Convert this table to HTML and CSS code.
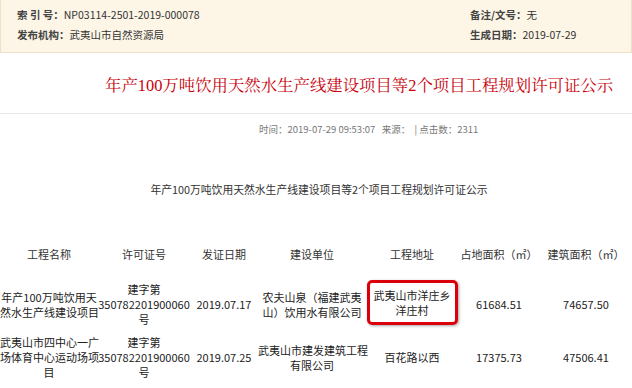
FILE: index.html
```html
<!DOCTYPE html>
<html lang="zh-CN">
<head>
<meta charset="utf-8">
<title>规划许可证公示</title>
<link rel="stylesheet" href="styles.css">
</head>
<body>
<div class="meta-box">
  <div class="meta-col meta-left">
    <div class="meta-row"><span class="meta-label">索 引 号：</span>NP03114-2501-2019-000078</div>
    <div class="meta-row"><span class="meta-label">发布机构：</span>武夷山市自然资源局</div>
  </div>
  <div class="meta-col meta-right">
    <div class="meta-row"><span class="meta-label">备注/文号：</span>无</div>
    <div class="meta-row"><span class="meta-label">生成日期：</span>2019-07-29</div>
  </div>
</div>

<div class="title-block">
  <h1 class="title">年产100万吨饮用天然水生产线建设项目等2个项目工程规划许可证公示</h1>
</div>

<div class="info">时间：2019-07-29 09:53:07&nbsp;&nbsp;&nbsp;来源：&nbsp;&nbsp;|&nbsp;点击数：2311</div>

<div class="subtitle">年产100万吨饮用天然水生产线建设项目等2个项目工程规划许可证公示</div>

<table class="grid">
  <colgroup>
    <col class="c1"><col class="c2"><col class="c3"><col class="c4"><col class="c5"><col class="c6"><col class="c7">
  </colgroup>
  <thead>
    <tr>
      <th>工程名称</th>
      <th>许可证号</th>
      <th>发证日期</th>
      <th>建设单位</th>
      <th>工程地址</th>
      <th>占地面积（㎡）</th>
      <th>建筑面积（㎡）</th>
    </tr>
  </thead>
  <tbody>
    <tr>
      <td>年产100万吨饮用天<br>然水生产线建设项目</td>
      <td>建字第<br>350782201900060<br>号</td>
      <td>2019.07.17</td>
      <td>农夫山泉（福建武夷<br>山）饮用水有限公司</td>
      <td><div class="mark">武夷山市洋庄乡<br>洋庄村</div></td>
      <td>61684.51</td>
      <td>74657.50</td>
    </tr>
    <tr>
      <td>武夷山市四中心一广<br>场体育中心运动场项<br>目</td>
      <td>建字第<br>350782201900060<br>号</td>
      <td>2019.07.25</td>
      <td>武夷山市建发建筑工程<br>有限公司</td>
      <td>百花路以西</td>
      <td>17375.73</td>
      <td>47506.41</td>
    </tr>
  </tbody>
</table>
</body>
</html>
```
FILE: styles.css
```css
html, body {
  margin: 0;
  padding: 0;
  background: #fff;
}
body {
  font-family: "Noto Sans CJK SC", "Noto Sans", sans-serif;
  font-size: 11px;
  color: #333;
  width: 632px;
  overflow: hidden;
}
.meta-box {
  box-sizing: border-box;
  height: 53px;
  background: #fdf6e6;
  border: 1px solid #ede2c9;
  border-top: none;
  display: flex;
  padding: 5px 0 0 16px;
}
.meta-col {
  display: flex;
  flex-direction: column;
}
.meta-left {
  width: 453px;
}
.meta-row {
  line-height: 20px;
  font-size: 10.5px;
  color: #333;
  white-space: nowrap;
}
.meta-label {
  font-weight: 600;
  color: #444;
}
.title-block {
  height: 61px;
  box-sizing: border-box;
  padding-top: 21px;
  border-bottom: 1px solid #e6e6e6;
}
.title {
  margin: 0;
  padding-left: 105px;
  font-family: "Liberation Serif", "Noto Serif CJK SC", "Noto Sans CJK SC", serif;
  font-weight: normal;
  font-size: 16.4px;
  line-height: 24px;
  color: #c8000b;
  white-space: nowrap;
}
.info {
  margin-top: 5px;
  padding-left: 259px;
  line-height: 20px;
  font-size: 9.5px;
  color: #777;
  white-space: nowrap;
}
.subtitle {
  margin-top: 40px;
  padding-left: 6px;
  line-height: 20px;
  text-align: center;
  font-size: 10.8px;
  color: #333;
  white-space: nowrap;
}
.grid {
  margin-top: 30px;
  width: 632px;
  table-layout: fixed;
  border-collapse: collapse;
}
.c1 { width: 98px; }
.c2 { width: 92px; }
.c3 { width: 68px; }
.c4 { width: 108px; }
.c5 { width: 92px; }
.c6 { width: 82px; }
.c7 { width: 92px; }
.grid th {
  height: 49px;
  padding: 0;
  font-weight: normal;
  font-size: 11px;
  color: #333;
  text-align: center;
  vertical-align: middle;
  white-space: nowrap;
}
.grid td {
  padding: 4px 0;
  font-size: 11px;
  line-height: 15px;
  color: #222;
  text-align: center;
  vertical-align: middle;
  white-space: nowrap;
}
.mark {
  display: inline-block;
  box-sizing: border-box;
  width: 91px;
  height: 45px;
  margin-top: -4px;
  padding: 5px 0 0;
  border: 3px solid #d9000c;
  border-radius: 5px;
  box-shadow: 1px 1px 3px rgba(0, 0, 0, 0.35);
  line-height: 15px;
}
```
